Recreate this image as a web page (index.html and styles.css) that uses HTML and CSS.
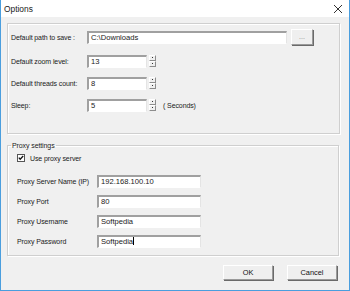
FILE: index.html
```html
<!DOCTYPE html>
<html lang="en">
<head>
    <meta charset="UTF-8">
    <title>Options</title>
    <link rel="stylesheet" href="styles.css">
</head>
<body>

<div class="window">
    <div class="titlebar">
        <span class="title">Options</span>
        <svg class="close" width="10" height="10" viewBox="0 0 10 10">
            <path d="M1 1 L9 9 M9 1 L1 9" stroke="#333" stroke-width="1" fill="none"/>
        </svg>
    </div>

    <div class="content">
        <div class="group general">
            <div class="row">
                <label class="lbl">Default path to save :</label>
                <div class="field path">C:\Downloads</div>
                <button class="browse">...</button>
            </div>
            <div class="row">
                <label class="lbl">Default zoom level:</label>
                <div class="field spin">13</div>
                <div class="spinner"><span class="up"></span><span class="down"></span></div>
            </div>
            <div class="row">
                <label class="lbl">Default threads count:</label>
                <div class="field spin">8</div>
                <div class="spinner"><span class="up"></span><span class="down"></span></div>
            </div>
            <div class="row">
                <label class="lbl">Sleep:</label>
                <div class="field spin">5</div>
                <div class="spinner"><span class="up"></span><span class="down"></span></div>
                <span class="unit">( Seconds)</span>
            </div>
        </div>

        <fieldset class="group proxy">
            <legend>Proxy settings</legend>
            <div class="check">
                <svg width="8" height="8" viewBox="0 0 8 8">
                    <rect x="0.5" y="0.5" width="7" height="7" fill="#fff" stroke="#555"/>
                    <path d="M1.8 3.6 L3.2 5.2 L6.2 2" stroke="#111" stroke-width="1.3" fill="none"/>
                </svg>
                <span>Use proxy server</span>
            </div>
            <div class="prow">
                <label class="plbl">Proxy Server Name (IP)</label>
                <div class="field pfield">192.168.100.10</div>
            </div>
            <div class="prow">
                <label class="plbl">Proxy Port</label>
                <div class="field pfield">80</div>
            </div>
            <div class="prow">
                <label class="plbl">Proxy Username</label>
                <div class="field pfield">Softpedia</div>
            </div>
            <div class="prow">
                <label class="plbl">Proxy Password</label>
                <div class="field pfield">Softpedia<span class="caret"></span></div>
            </div>
        </fieldset>

        <div class="actions">
            <button class="btn">OK</button>
            <button class="btn">Cancel</button>
        </div>
    </div>
</div>

</body>
</html>
```

FILE: styles.css
```css
body {
    margin: 0;
    font-family: "Liberation Sans", Arial, sans-serif;
    font-size: 7px;
    letter-spacing: -0.1px;
    color: #1a1a1a;
}

.window {
    width: 350px;
    height: 291px;
    box-sizing: border-box;
    border: 1px solid #4a9ede;
    border-top: none;
    background-color: #f0f0f0;
    display: flex;
    flex-direction: column;
}

.titlebar {
    height: 17px;
    background-color: #fff;
    display: flex;
    align-items: center;
    justify-content: space-between;
    padding: 0 6px 0 3px;
    flex-shrink: 0;
    font-size: 8.4px;
    letter-spacing: 0;
    color: #222;
}

.close {
    margin-top: 1px;
}

.content {
    padding: 6px 9px 0 6px;
}

.group {
    border: 1px solid #cfcfcf;
    box-shadow: inset 1px 1px #fff, 1px 1px #fff;
}

.general {
    height: 104px;
    padding: 5px 0 0 3px;
}

.row {
    display: flex;
    align-items: center;
    height: 14px;
    margin-bottom: 8px;
}

.row:first-child {
    height: 16px;
    margin-bottom: 9px;
}

.lbl {
    width: 76px;
}

.field {
    height: 13px;
    box-sizing: border-box;
    background-color: #fff;
    border-top: 2px solid #a0a0a0;
    border-left: 2px solid #a0a0a0;
    border-right: 1px solid #e4e4e4;
    border-bottom: 1px solid #fff;
    padding-left: 2px;
    line-height: 10px;
    font-size: 7.6px;
    letter-spacing: 0;
}

.path {
    width: 200px;
}

.browse {
    width: 22px;
    height: 16px;
    margin-left: 4px;
    padding: 0;
    background-color: #efefef;
    border: 1px solid;
    border-color: #fff #9a9a9a #9a9a9a #fff;
    box-shadow: 1px 1px #6a6a6a;
    font-family: inherit;
    font-size: 7px;
    color: #8a8a8a;
    line-height: 12px;
}

.spin {
    width: 60px;
}

.spinner {
    display: flex;
    flex-direction: column;
    margin-left: 2px;
}

.spinner span {
    width: 7px;
    height: 6px;
    box-sizing: border-box;
    border: 1px solid;
    border-color: #fff #8c8c8c #8c8c8c #fff;
    background-color: #efefef;
    position: relative;
}

.spinner span::after {
    content: "";
    position: absolute;
    left: 2px;
    top: 1px;
    width: 1px;
    height: 1px;
    background-color: #333;
}

.unit {
    margin-left: 7px;
}

fieldset.proxy {
    margin: 8px 1px 0 0;
    padding: 2px 0 0 9px;
    height: 110px;
    min-width: 0;
}

.proxy legend {
    padding: 0 1px;
    margin-left: -6px;
    color: #222;
}

.check {
    display: flex;
    align-items: center;
    height: 10px;
    margin: 2px 0 12px 0;
}

.check span {
    margin-left: 5px;
}

.prow {
    display: flex;
    align-items: center;
    height: 13px;
    margin-bottom: 7px;
}

.plbl {
    width: 80px;
}

.pfield {
    width: 104px;
}

.caret {
    display: inline-block;
    width: 1px;
    height: 8px;
    background-color: #000;
    vertical-align: -1px;
}

.actions {
    display: flex;
    justify-content: flex-end;
    gap: 14px;
    margin-top: 9px;
    padding-right: 3px;
}

.btn {
    width: 50px;
    height: 15px;
    padding: 0;
    background-color: #efefef;
    border: 1px solid;
    border-color: #fff #9a9a9a #9a9a9a #fff;
    box-shadow: 1px 1px #6a6a6a;
    font-family: inherit;
    font-size: 7.4px;
    letter-spacing: 0;
    color: #111;
}
```
